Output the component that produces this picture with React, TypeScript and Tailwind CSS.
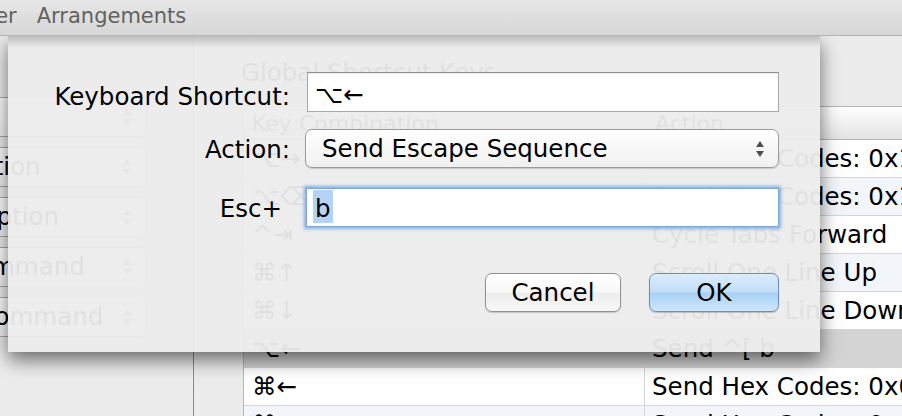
import React from "react";

type Row = { keys: string; action: string; selected?: boolean };

// rows of the global shortcut table behind the sheet
const rows: Row[] = [
  { keys: "⌥→", action: "Send Hex Codes: 0x1b 0x66" },
  { keys: "⌥⌫", action: "Send Hex Codes: 0x1b 0x7f" },
  { keys: "^⇥", action: "Cycle Tabs Forward" },
  { keys: "⌘↑", action: "Scroll One Line Up" },
  { keys: "⌘↓", action: "Scroll One Line Down" },
  { keys: "⌥←", action: "Send ^[ b", selected: true },
  { keys: "⌘←", action: "Send Hex Codes: 0x01" },
  { keys: "⌘→", action: "Send Hex Codes: 0x05" },
];

const modifiers = ["Control", "Left Option", "Right Option", "Left Command", "Right Command"];

const UpDown = ({ color = "#4f4f4f" }: { color?: string }) => (
  <svg width="10" height="20" viewBox="0 0 10 20" className="shrink-0">
    <path d="M5 2 L9 8 H1 Z" fill={color} />
    <path d="M5 18 L9 12 H1 Z" fill={color} />
  </svg>
);

const Toolbar = () => (
  <div className="flex h-[36px] items-center gap-[20px] border-b border-[#b3b3b3] bg-linear-to-b from-[#e7e7e7] to-[#d6d6d6] pb-[3px] text-[21px] leading-[26px] text-[#626262]">
    <span className="-ml-[57px]">Pointer</span>
    <span>Arrangements</span>
  </div>
);

const ModifierPanel = () => (
  <div className="flex w-[194px] shrink-0 flex-col gap-[10px] border-r border-[#8c8c8c] pt-[61px]">
    {modifiers.map((m) => (
      <div
        key={m}
        className="-ml-[108px] flex h-[40px] w-[255px] items-center justify-between rounded-[7px] border border-[#a6a6a6] bg-linear-to-b from-white to-[#efefef] pl-[12px] pr-[14px] text-[24.5px] leading-[28px]"
      >
        <span>{m}</span>
        <UpDown color="#777" />
      </div>
    ))}
  </div>
);

const ShortcutTable = () => (
  <div className="min-w-0 flex-1 pl-[49px] pt-[23px]">
    <div className="-ml-[2px] text-[24.5px] leading-[28px]">Global Shortcut Keys</div>
    <div className="mt-[19px] w-[720px] border-l border-[#b5b5b5]">
      <div className="flex h-[34px] items-center border-y border-[#b5b5b5] bg-linear-to-b from-white to-[#e3e3e3] text-[22px] text-[#222]">
        <div className="w-[401px] shrink-0 border-r border-[#c9c9c9] pl-[8px]">Key Combination</div>
        <div className="pl-[10px]">Action</div>
      </div>
      {rows.map((r, i) => (
        <div
          key={i}
          className={
            "flex h-[38px] items-center border-b border-[#d6d6d6] text-[24.5px] leading-[28px] " +
            (r.selected ? "bg-[#d4d4d4]" : i % 2 === 0 ? "bg-white" : "bg-[#f2f5fa]")
          }
        >
          <div className="flex h-full w-[401px] shrink-0 items-center border-r border-[#d6d6d6] pl-[8px]">{r.keys}</div>
          <div className="whitespace-nowrap pl-[7px]">{r.action}</div>
        </div>
      ))}
    </div>
  </div>
);

const Sheet = () => (
  <div className="absolute inset-x-0 bottom-0 top-[36px] overflow-hidden">
    <div className="absolute left-[8px] top-0 h-[316px] w-[812px] bg-[#ececec]/95 shadow-[0_8px_18px_rgba(0,0,0,0.55)]">
      <div className="absolute inset-x-0 top-0 h-[12px] bg-linear-to-b from-black/20 to-transparent" />
      <div className="relative flex flex-col pt-[36px] text-[24.5px] leading-[28px]">
        {/* Keyboard shortcut */}
        <div className="flex items-start">
          <label className="w-[282px] shrink-0 pt-[11px] text-right">Keyboard Shortcut:</label>
          <div className="ml-[17px] h-[40px] w-[472px] border border-[#a8a8a8] border-t-[#8e8e8e] bg-white pl-[7px] pt-[8px] shadow-[inset_0_1px_1px_rgba(0,0,0,0.08)]">
            ⌥←
          </div>
        </div>

        {/* Action */}
        <div className="mt-[17px] flex items-start">
          <label className="w-[282px] shrink-0 pt-[7px] text-right">Action:</label>
          <div className="ml-[15px] flex h-[39px] w-[474px] items-center justify-between rounded-[7px] border border-[#9c9c9c] bg-linear-to-b from-white to-[#f0f0f0] pl-[16px] pr-[13px] shadow-[0_1px_1px_rgba(0,0,0,0.15)]">
            <span>Send Escape Sequence</span>
            <UpDown />
          </div>
        </div>

        {/* Esc+ */}
        <div className="mt-[20px] flex items-start">
          <label className="w-[282px] shrink-0 pr-[8px] pt-[7px] text-right">Esc+</label>
          <div className="ml-[16px] h-[39px] w-[473px] border border-[#7ea7d6] bg-white pl-[6px] pt-[1px] shadow-[0_0_3px_2px_rgba(100,158,225,0.75)]">
            <span className="inline-block h-[33px] bg-[#b5d3f7] px-[2px] pt-[5px]">b</span>
          </div>
        </div>

        {/* buttons */}
        <div className="mt-[46px] flex justify-end gap-[28px] pr-[41px]">
          <button className="flex h-[39px] w-[136px] justify-center rounded-[7px] border border-[#909090] bg-[linear-gradient(to_bottom,#ffffff_0%,#f7f7f7_50%,#ededed_52%,#f8f8f8_100%)] pt-[5px] shadow-[0_1px_1px_rgba(0,0,0,0.18)]">
            Cancel
          </button>
          <button className="flex h-[39px] w-[130px] justify-center rounded-[7px] border border-[#6b8fbb] bg-[linear-gradient(to_bottom,#dbecfc_0%,#c3def8_48%,#a9d0f5_52%,#cde7fd_100%)] pt-[5px] shadow-[0_1px_1px_rgba(0,0,0,0.2)]">
            OK
          </button>
        </div>
      </div>
    </div>
  </div>
);

export default function App() {
  return (
    <div className="relative h-[416px] w-[902px] overflow-hidden bg-[#ececec] font-['DejaVu_Sans',sans-serif] text-black">
      <Toolbar />
      <div className="flex h-[380px]">
        <ModifierPanel />
        <ShortcutTable />
      </div>
      <Sheet />
    </div>
  );
}
